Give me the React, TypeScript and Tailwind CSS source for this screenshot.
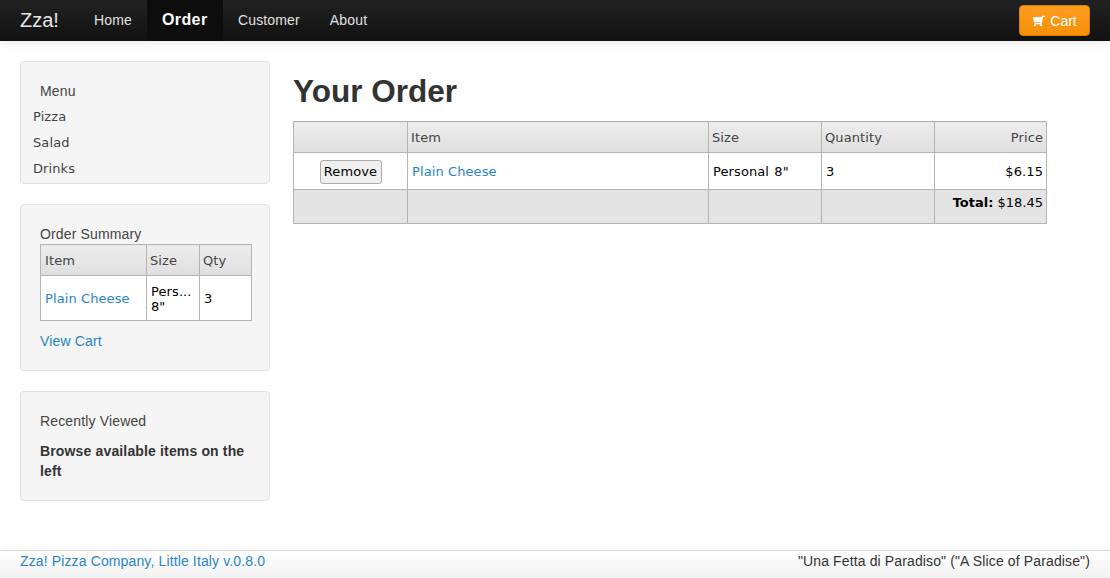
import { FaShoppingCart } from 'react-icons/fa'

const sans = "font-['Liberation_Sans',Arial,sans-serif]"
const grid = "font-['DejaVu_Sans',Verdana,sans-serif] tracking-[0.1px]"
const th = 'border border-[#b4b4b4] bg-gradient-to-b from-[#ededed] to-[#dfdfdf] px-[3px] pt-[2px] font-normal text-[13px] text-[#444] text-left'
const td = 'border border-[#b4b4b4] bg-white px-[4px] pt-[2px] text-[13px] text-black'
const tf = 'border border-[#b4b4b4] bg-[#e4e4e4] px-[4px] align-top text-[13px] text-black'

function Well({ className, children }: { className: string; children: React.ReactNode }) {
  return <div className={`rounded border border-[#e3e3e3] bg-[#f5f5f5] ${className}`}>{children}</div>
}

function Sidebar() {
  return (
    <aside className="w-[250px] shrink-0 flex flex-col gap-5 tracking-[0.15px]">
      <Well className="h-[123px] pt-[19px] pl-3">
        <div className="pl-[7px] text-sm leading-5 text-[#444]">Menu</div>
        <ul className={`${grid} pt-[3px] text-[13px] text-[#444]`}>
          <li className="h-[26px] leading-[26px]">Pizza</li>
          <li className="h-[26px] leading-[26px]">Salad</li>
          <li className="h-[26px] leading-[26px]">Drinks</li>
        </ul>
      </Well>
      <Well className="h-[167px] pt-[19px] px-[19px]">
        <div className="text-sm leading-5 text-[#444]">Order Summary</div>
        <table className={`${grid} w-[211px] table-fixed border-collapse`}>
          <colgroup>
            <col className="w-[106px]" />
            <col className="w-[53px]" />
            <col className="w-[52px]" />
          </colgroup>
          <thead>
            <tr className="h-[31px]">
              <th className={`${th} !px-1`}>Item</th>
              <th className={th}>Size</th>
              <th className={th}>Qty</th>
            </tr>
          </thead>
          <tbody>
            <tr className="h-[45px]">
              <td className={`${td} !text-[#2a85c7]`}>Plain Cheese</td>
              <td className={`${td} leading-[15px]`}>
                Pers...
                <br />
                8"
              </td>
              <td className={td}>3</td>
            </tr>
          </tbody>
        </table>
        <a className="block mt-[10px] text-sm leading-5 text-[#2a85c7]">View Cart</a>
      </Well>
      <Well className="h-[110px] pt-[19px] px-[19px] text-sm leading-5 text-[#333]">
        <div className="mb-[10px] text-[#444]">Recently Viewed</div>
        <div className="font-bold">Browse available items on the left</div>
      </Well>
    </aside>
  )
}

function OrderTable() {
  return (
    <table className={`${grid} w-[753px] table-fixed border-collapse`}>
      <colgroup>
        <col className="w-[114px]" />
        <col className="w-[301px]" />
        <col className="w-[113px]" />
        <col className="w-[113px]" />
        <col className="w-[112px]" />
      </colgroup>
      <thead>
        <tr className="h-[31px]">
          <th className={th}></th>
          <th className={th}>Item</th>
          <th className={th}>Size</th>
          <th className={th}>Quantity</th>
          <th className={`${th} !text-right`}>Price</th>
        </tr>
      </thead>
      <tbody>
        <tr className="h-[37px]">
          <td className={`${td} text-center`}>
            <button className="h-6 w-[62px] rounded-[3px] border border-[#aaa] bg-[#efefef] text-[13px] text-black">
              Remove
            </button>
          </td>
          <td className={`${td} !text-[#2a85c7]`}>Plain Cheese</td>
          <td className={`${td} [word-spacing:1px]`}>Personal 8"</td>
          <td className={td}>3</td>
          <td className={`${td} !px-[3px] text-right`}>$6.15</td>
        </tr>
      </tbody>
      <tfoot>
        <tr className="h-[34px]">
          <td className={tf}></td>
          <td className={tf}></td>
          <td className={tf}></td>
          <td className={tf}></td>
          <td className={`${tf} !px-[3px] pt-[5px] text-right leading-[16px] tracking-normal`}>
            <b>Total:</b> $18.45
          </td>
        </tr>
      </tfoot>
    </table>
  )
}

export default function App() {
  return (
    <div className={`${sans} h-[578px] flex flex-col bg-white overflow-hidden`}>
      <nav className="relative z-10 h-[41px] shrink-0 flex items-stretch justify-between bg-gradient-to-b from-[#222] to-[#111] pl-5 pr-5 shadow-[0_1px_10px_rgba(0,0,0,0.1)]">
        <div className="flex items-stretch tracking-[0.15px]">
          <a className="w-[59px] text-xl leading-[41px] text-[#e6e6e6] tracking-normal">Zza!</a>
          <a className="px-[15px] text-sm leading-[41px] text-[#e0e0e0]">Home</a>
          <a className="w-[76px] pl-[15px] bg-[#0d0d0d] text-base font-bold leading-[39px] text-white tracking-[0.4px]">Order</a>
          <a className="px-[15px] text-sm leading-[41px] text-[#e0e0e0]">Customer</a>
          <a className="px-[15px] text-sm leading-[41px] text-[#e0e0e0]">About</a>
        </div>
        <button className="my-[5px] w-[71px] pl-[1px] flex items-center justify-center gap-[5px] rounded bg-gradient-to-b from-[#fb9d1e] to-[#f88f04] border border-[#d9800a] text-sm text-white">
          <FaShoppingCart size={12} className="-scale-x-100" />
          Cart
        </button>
      </nav>
      <main className="flex-1 flex gap-[23px] pt-5 pl-5 min-h-0">
        <Sidebar />
        <section className="pt-[13px]">
          <h1 className="h-[47px] text-[31.5px] leading-[34px] font-bold text-[#333]">Your Order</h1>
          <OrderTable />
        </section>
      </main>
      <footer className="h-[28px] shrink-0 flex justify-between border-t border-[#d5d5d5] bg-gradient-to-b from-white to-[#f2f2f2] px-5 text-sm tracking-[0.13px] leading-[21px] shadow-[0_-1px_10px_rgba(0,0,0,0.05)]">
        <a className="text-[#2a85c7]">Zza! Pizza Company, Little Italy v.0.8.0</a>
        <span className="text-[#333]">"Una Fetta di Paradiso" ("A Slice of Paradise")</span>
      </footer>
    </div>
  )
}
